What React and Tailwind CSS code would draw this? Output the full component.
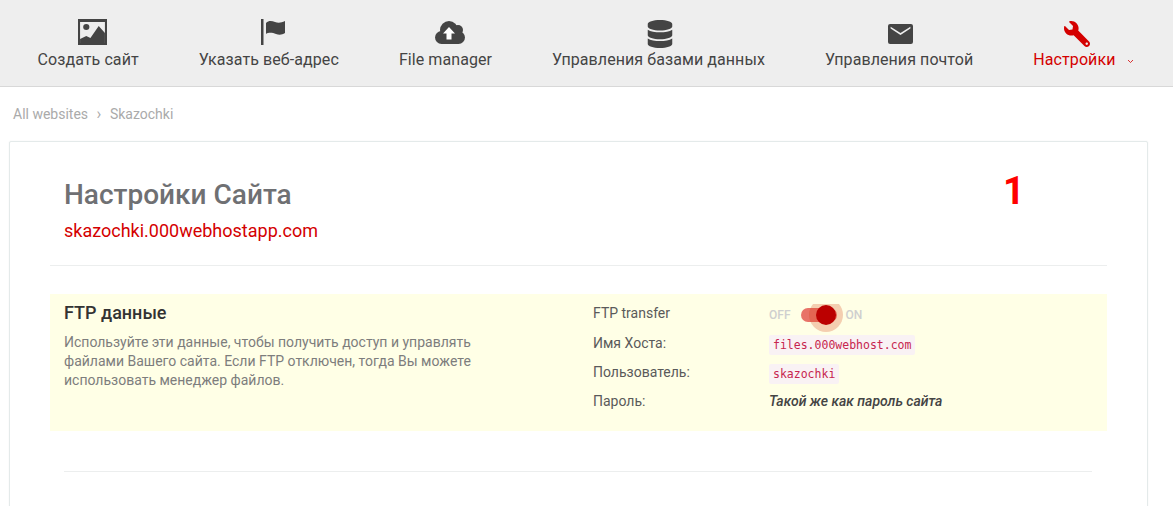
import React from 'react';
import { FaDatabase, FaWrench } from 'react-icons/fa';

const ImageIcon = () => (
  <svg width="29" height="26" viewBox="0 0 28 26" preserveAspectRatio="none" className="text-[#444]" fill="currentColor">
    <path fillRule="evenodd" d="M0 0h28v26H0z M2 3v21h24V3z" />
    <circle cx="8" cy="8" r="3" />
    <path d="M2 24v-4l6-3 4 2 8-12 6 7v10z" />
  </svg>
);

const FlagIcon = () => (
  <svg width="24" height="26" viewBox="0 0 24 26" className="text-[#444]" fill="currentColor">
    <rect x="0" y="0" width="2.500" height="26" />
    <path d="M5 4c3-3 6-2 9-1s6 1 10-1v12c-3 2-6 2-9 1s-7-2-10 0z" />
  </svg>
);

const CloudIcon = () => (
  <svg width="30" height="23" viewBox="0 0 30 23" className="text-[#444]" fill="currentColor">
    <circle cx="14" cy="9" r="9" />
    <circle cx="23" cy="9" r="5" />
    <rect x="0" y="10" width="30" height="13" rx="6.500" />
    <path d="M14 6l6 6.500h-3.500v6h-5v-6H8z" fill="#ffffff" />
  </svg>
);

const MailIcon = () => (
  <svg width="25" height="20" viewBox="0 0 24 20" preserveAspectRatio="none" className="text-[#444]" fill="currentColor">
    <path fillRule="evenodd" d="M2 0h20a2 2 0 0 1 2 2v16a2 2 0 0 1-2 2H2a2 2 0 0 1-2-2V2a2 2 0 0 1 2-2z M2.500 4.500 12 11l9.500-6.500v-1.800L12 9 2.500 2.700z" />
  </svg>
);

const navItems = [
  { label: 'Создать сайт', pad: 'pb-[6px] pl-[8px]', icon: <ImageIcon /> },
  { label: 'Указать веб-адрес', pad: 'pb-[6px] pl-[8px]', icon: <FlagIcon /> },
  { label: 'File manager', pad: 'pb-[7px] pl-[10px]', icon: <CloudIcon /> },
  { label: 'Управления базами данных', pad: 'pb-[3px] pl-[4px]', icon: <FaDatabase className="text-[#444] text-[28px]" /> },
  { label: 'Управления почтой', pad: 'pb-[7px] pl-[2px]', icon: <MailIcon /> },
];

const Code = ({ children }) => (
  <code className="bg-[#f9f2f4] text-[#c7254e] rounded-[2px] px-1 py-[3px] text-[11.500px] font-['DejaVu_Sans_Mono',monospace]">
    {children}
  </code>
);

const Row = ({ label, children }) => (
  <div className="flex h-[29px] items-center">
    <div className="w-[176px] text-[14px] text-[#5a5a5a]">{label}</div>
    <div>{children}</div>
  </div>
);

export default function App() {
  return (
    <div className="h-[506px] overflow-hidden bg-white font-['Roboto',sans-serif]">
      <nav className="flex h-[87px] items-start border-b border-[#d8d8d8] bg-[#eeeeee] pl-[7.500px]">
        {navItems.map((item) => (
          <a key={item.label} className="flex flex-col items-center px-[30px] text-[16px] tracking-[0.08px] text-[#444]">
            <div className={`flex h-[51px] items-end ${item.pad}`}>{item.icon}</div>
            <div className="leading-[18px]">{item.label}</div>
          </a>
        ))}
        <a className="flex flex-col items-center pl-[30px] text-[16px] tracking-[0.08px] text-[#d40000]">
          <div className="flex h-[51px] items-end pb-[4px] pl-[5px]">
            <FaWrench className="-scale-x-100 text-[26px]" />
          </div>
          <div className="leading-[18px]">Настройки</div>
        </a>
        <svg className="ml-[12px] mt-[59px]" width="7" height="5" viewBox="0 0 7 5" fill="none" stroke="#d40000" strokeWidth="0.8">
          <path d="M1 1l2.500 2.500L6 1" />
        </svg>
      </nav>

      <div className="flex h-[54px] items-center gap-[8.500px] pl-[13px] text-[14px] text-[#aaaaaa]">
        <span>All websites</span>
        <span className="text-[16px]">›</span>
        <span>Skazochki</span>
      </div>

      <div className="relative ml-[9px] w-[1139px] rounded-[2px] border border-[#e4eaea] bg-white px-[40px] pt-[37px] shadow-[0_0_2px_rgba(0,0,0,0.06)]">
        <div className="absolute left-[993px] top-[26px] text-[38px] font-bold leading-[46px] text-[#ff0000]">1</div>
        <div className="border-b border-[#eceeee] pb-[22px] pl-[14px]">
          <h1 className="text-[28px] font-medium leading-[32px] text-[#6f7073]">Настройки Сайта</h1>
          <div className="mt-[8px] text-[18px] leading-[24px] text-[#d40000]">skazochki.000webhostapp.com</div>
        </div>

        <div className="mt-[28px] flex h-[137px] bg-[#ffffe6] pl-[14px] pt-[9px]">
          <div className="w-[529px]">
            <h2 className="text-[18px] font-medium leading-[20px] text-[#333]">FTP данные</h2>
            <p className="mt-[10px] w-[420px] text-[14px] leading-[19px] text-[#7d7d7d]">
              Используйте эти данные, чтобы получить доступ и управлять файлами Вашего сайта. Если FTP отключен, тогда Вы можете использовать менеджер файлов.
            </p>
          </div>
          <div className="-mt-[4px]">
            <Row label="FTP transfer">
              <div className="mt-[2px] flex items-center text-[12px] font-medium text-[#cfcfcf]">
                <span>OFF</span>
                <div className="relative ml-[10px] mr-[9px] h-[14px] w-[36px] rounded-full bg-[#d40000]/55">
                  <div className="absolute -right-[6px] -top-[4px] h-[28px] w-[34px] overflow-hidden">
                    <div className="absolute left-[0px] top-[-6px] h-[34px] w-[34px] rounded-full bg-[#d43b10]/25" />
                    <div className="absolute left-[7px] top-[1px] h-[20px] w-[20px] rounded-full bg-[#bb0000]" />
                  </div>
                </div>
                <span>ON</span>
              </div>
            </Row>
            <div className="h-[1px]" />
            <Row label="Имя Хоста:"><Code>files.000webhost.com</Code></Row>
            <Row label="Пользователь:"><Code>skazochki</Code></Row>
            <Row label="Пароль:">
              <span className="-mt-[1px] block text-[14px] font-medium italic text-[#444]">Такой же как пароль сайта</span>
            </Row>
          </div>
        </div>

        <div className="ml-[14px] mr-[15px] mt-[40px] border-b border-[#eceeee]" />
        <div className="h-[60px]" />
      </div>
    </div>
  );
}
